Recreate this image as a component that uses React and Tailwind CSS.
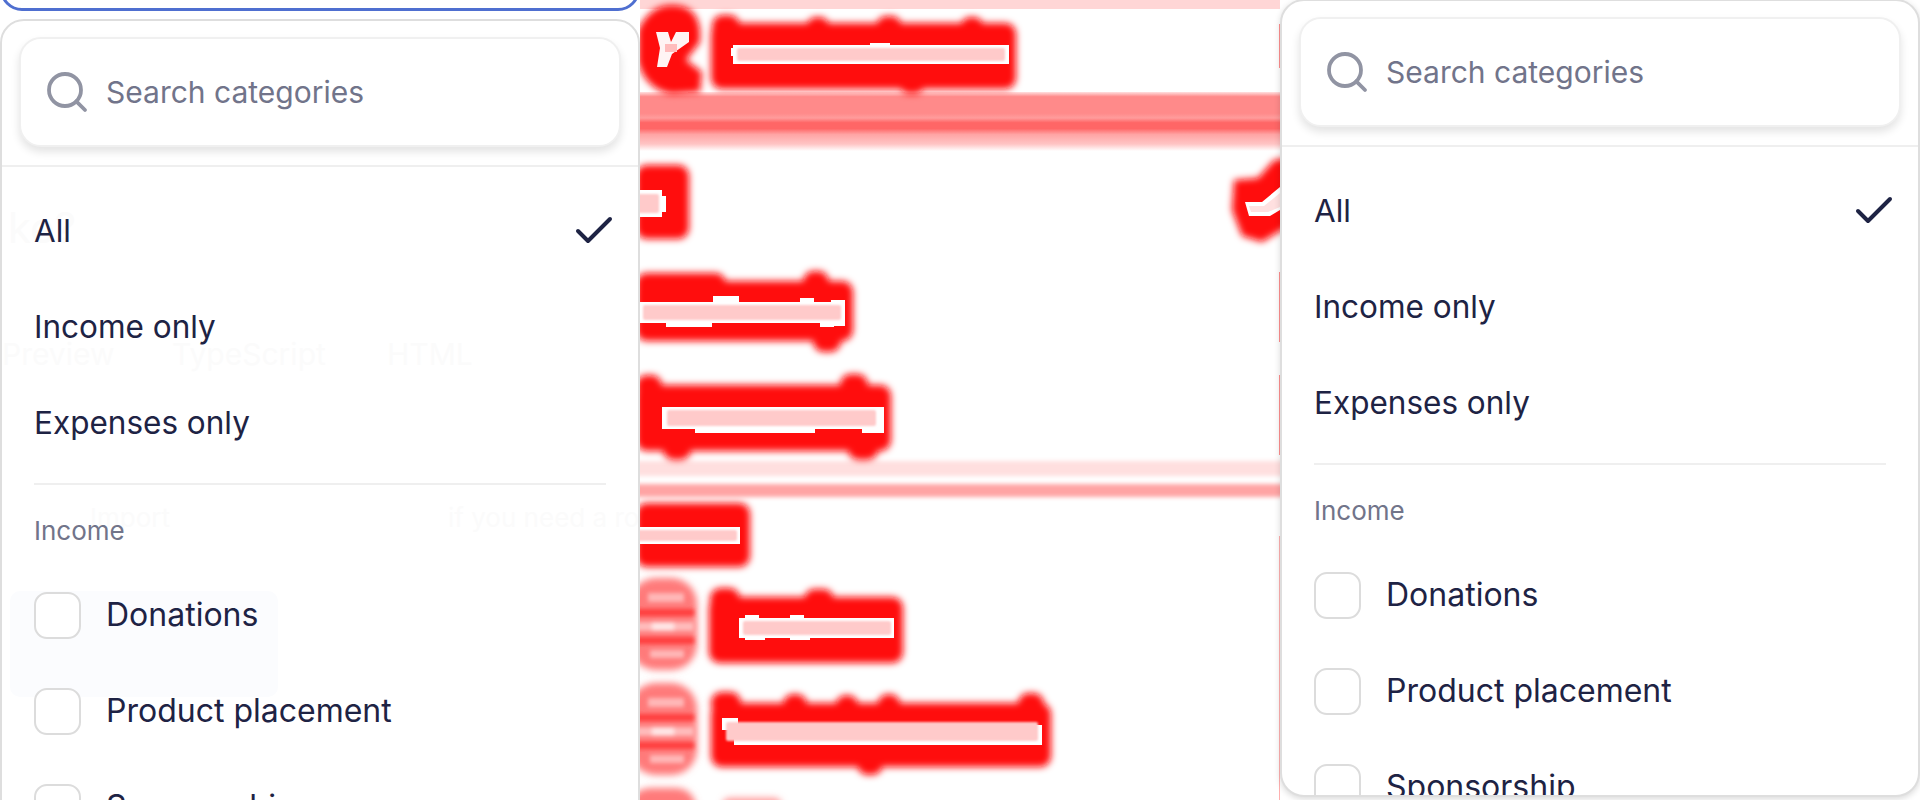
import React from 'react';
import { Search, Check } from 'lucide-react';

const fontStack = { fontFamily: 'Inter, "Noto Sans", sans-serif' };

// diff column: each text is a red mass (main box + ascender/descender bumps) and a pale core
const masses = [
  // search text
  [[711, 23, 305, 66], [712, 15, 28, 22], [806, 17, 24, 22], [876, 16, 26, 22], [960, 17, 24, 22], [900, 80, 24, 14]],
  // All (left), Income only, Expenses only
  [[636, 165, 53, 74]],
  [[636, 281, 217, 60], [636, 273, 90, 22], [803, 271, 26, 24], [813, 330, 28, 22]],
  [[636, 385, 255, 66], [636, 375, 26, 22], [840, 374, 28, 22], [663, 440, 28, 20], [848, 440, 30, 20]],
  // Income label
  [[636, 503, 114, 64]],
  // Donations, Product placement
  [[709, 597, 194, 66], [710, 588, 30, 22], [804, 589, 30, 22]],
  [[711, 703, 340, 64], [711, 692, 30, 22], [783, 694, 24, 20], [836, 695, 22, 18], [878, 694, 22, 18], [1018, 693, 26, 22], [858, 760, 24, 15]],
];

// core: white edge boxes, then the pale fill
const cores = [
  { edge: [[733, 45, 276, 19], [731, 48, 10, 8], [870, 43, 20, 6]], fill: [737, 48, 268, 13] },
  { edge: [[636, 190, 26, 27], [660, 196, 6, 16]], fill: [636, 194, 23, 19] },
  { edge: [[640, 302, 204, 21], [666, 320, 46, 7], [713, 296, 26, 6], [800, 298, 14, 6], [820, 312, 14, 15], [831, 300, 14, 26]], fill: [643, 305, 198, 15] },
  { edge: [[662, 407, 218, 22], [695, 428, 120, 5], [862, 407, 22, 26]], fill: [667, 410, 209, 16] },
  { edge: [[636, 527, 104, 17]], fill: [636, 530, 101, 11] },
  { edge: [[739, 618, 152, 20], [745, 615, 14, 5], [790, 615, 14, 5], [745, 636, 20, 4], [790, 636, 20, 4], [832, 618, 62, 20]], fill: [743, 621, 148, 14] },
  { edge: [[722, 718, 16, 12], [734, 725, 308, 20]], fill: [726, 722, 312, 19] },
];

function Mass({ rects }) {
  return rects.map(([x, y, w, h]) => (
    <rect key={`${x}-${y}`} x={x} y={y} width={w} height={h} rx="11" fill="#ff0808" />
  ));
}

function CheckboxBlob({ y }) {
  return (
    <g>
      <g filter="url(#soft)">
        <rect x="630" y={y} width="67" height="92" rx="26" fill="#ff7a7a" />
      </g>
      <g filter="url(#mid)">
        <rect x="648" y={y + 15} width="36" height="9" fill="#ffb8b8" />
        <rect x="634" y={y + 31} width="60" height="7" fill="#ff3c3c" />
        <rect x="634" y={y + 44} width="60" height="9" fill="#ffbcbc" />
        <rect x="652" y={y + 44} width="22" height="9" fill="#ffe6e6" />
        <rect x="634" y={y + 59} width="60" height="7" fill="#ff3c3c" />
        <rect x="650" y={y + 72} width="34" height="8" fill="#ffb8b8" />
      </g>
    </g>
  );
}

function DiffColumn() {
  return (
    <svg width="640" height="800" viewBox="640 0 640 800" className="block shrink-0 bg-white">
      <defs>
        <filter id="soft" x="-30%" y="-30%" width="160%" height="160%">
          <feGaussianBlur stdDeviation="3.5" />
        </filter>
        <filter id="mid" x="-30%" y="-60%" width="160%" height="220%">
          <feGaussianBlur stdDeviation="2" />
        </filter>
        <filter id="softer" x="-30%" y="-30%" width="160%" height="160%">
          <feGaussianBlur stdDeviation="1.2" />
        </filter>
        <linearGradient id="band" x1="0" y1="0" x2="0" y2="1">
          <stop offset="0" stopColor="#ffe0e0" />
          <stop offset="0.08" stopColor="#ff8a8a" />
          <stop offset="0.36" stopColor="#ff8a8a" />
          <stop offset="0.44" stopColor="#ff9c9c" />
          <stop offset="0.52" stopColor="#ff6666" />
          <stop offset="0.62" stopColor="#ff6666" />
          <stop offset="0.72" stopColor="#ffa4a4" />
          <stop offset="0.88" stopColor="#ffc4c4" />
          <stop offset="1" stopColor="#ffffff" />
        </linearGradient>
      </defs>

      <rect x="640" y="0" width="640" height="9" fill="#ffd6d6" />
      <rect x="640" y="92" width="640" height="59" fill="url(#band)" />
      <g filter="url(#mid)">
        <rect x="630" y="461" width="660" height="15" fill="#ffdfdf" />
        <rect x="630" y="484" width="660" height="13" fill="#ffa4a4" />
      </g>

      {/* search icon */}
      <g filter="url(#soft)">
        <path d="M638 30 Q650 5 672 5 Q697 5 700 30 L700 42 L686 60 L702 72 L700 92 L672 94 Q646 90 638 62 Z" fill="#ff0808" />
        {masses.map((rects, i) => <Mass key={i} rects={rects} />)}
        {/* check on the right */}
        <path d="M1234 180 L1258 178 L1274 160 L1290 158 L1290 225 L1262 242 L1242 236 L1232 210 Z" fill="#ff0808" />
      </g>
      <path d="M656 32 H668 L671 42 L676 32 H689 V42 L672 54 L667 67 H657 L660 48 Z" fill="#fff4f4" />
      <rect x="665" y="44" width="12" height="8" fill="#ffbcbc" />
      <path d="M1245 202 H1262 L1280 187 V210 L1270 216 H1249 Z" fill="#ffffff" />
      <path d="M1249 206 H1264 L1280 193 V207 L1268 212 H1251 Z" fill="#ffe0e0" />

      {cores.map(({ edge, fill }, i) => (
        <g key={i}>
          {edge.map(([x, y, w, h]) => (
            <rect key={`${x}-${y}`} x={x} y={y} width={w} height={h} fill="#ffffff" />
          ))}
          <rect x={fill[0]} y={fill[1]} width={fill[2]} height={fill[3]} rx="2" fill="#ffcaca" filter="url(#softer)" />
        </g>
      ))}

      <CheckboxBlob y={578} />
      <CheckboxBlob y={683} />
      <g filter="url(#soft)">
        <rect x="630" y="788" width="66" height="40" rx="20" fill="#ff7a7a" />
        <rect x="722" y="798" width="60" height="20" rx="8" fill="#ff9a9a" />
      </g>

      {/* edge marks where the right panel clips the diff */}
      <rect x="1279" y="536" width="1" height="264" fill="#ffb0b0" />
      <rect x="1279" y="272" width="1" height="70" fill="#ff9090" />
      <rect x="1279" y="375" width="1" height="80" fill="#ff9090" />
      <rect x="1279" y="24" width="1" height="44" fill="#ff9090" />
    </svg>
  );
}

function Row({ label, checked }) {
  return (
    <div className="flex items-center justify-between h-[96px] pl-[32px] pr-[20px] text-[31.5px] leading-none text-[#1e2344]">
      <span>{label}</span>
      {checked && <Check size={48} strokeWidth={2} className="text-[#1e2344]" />}
    </div>
  );
}

function CheckRow({ label }) {
  return (
    <div className="flex items-center gap-[25px] h-[96px] pl-[32px] text-[32px] leading-none text-[#1e2344]">
      <span className="w-[47px] h-[47px] shrink-0 rounded-[13px] border-2 border-[#dcdcdc] bg-white" />
      <span>{label}</span>
    </div>
  );
}

function CategoryPanel() {
  return (
    <div className="relative">
      <div className="pt-[16px] px-[17px] pb-[18px] border-b-2 border-[#efefef]">
        <div className="flex items-center gap-[15px] h-[110px] pl-[22px] rounded-[22px] border-2 border-[#f0f0f0] bg-white shadow-[0_5px_8px_rgba(0,0,0,0.11)]">
          <Search size={48} strokeWidth={1.9} className="text-[#9194a3] shrink-0" />
          <span className="text-[30px] leading-none text-[#71748a]">Search categories</span>
        </div>
      </div>
      <div className="pt-[16px]">
        <Row label="All" checked />
        <Row label="Income only" />
        <Row label="Expenses only" />
        <div className="mx-[32px] mt-[12px] border-t-2 border-[#efefef]" />
        <div className="pl-[32px] pt-[31px] pb-[21px] text-[26px] leading-[30px] text-[#71748a]">Income</div>
        <CheckRow label="Donations" />
        <CheckRow label="Product placement" />
        <CheckRow label="Sponsorship" />
      </div>
    </div>
  );
}

// page behind the left panel, showing through very faintly
function GhostPage() {
  return (
    <div className="absolute inset-0 text-[#fbfbfb] text-[30px] leading-none">
      <span className="absolute left-[6px] top-[186px] text-[42px]">ke?</span>
      <span className="absolute left-0 top-[318px]">Preview</span>
      <span className="absolute left-[170px] top-[318px]">TypeScript</span>
      <span className="absolute left-[385px] top-[318px]">HTML</span>
      <span className="absolute left-[88px] top-[484px] text-[26px]">Import</span>
      <span className="absolute left-[446px] top-[484px] text-[26px] whitespace-nowrap">if you need a rou</span>
      <div className="absolute left-[8px] top-[570px] w-[268px] h-[106px] rounded-[10px] bg-[#fbfcfe]" />
    </div>
  );
}

export default function App() {
  return (
    <div className="flex w-[1920px] h-[800px] overflow-hidden bg-white" style={fontStack}>
      <div className="w-[640px] shrink-0 h-[800px] overflow-hidden">
        <div className="h-[51px] -mt-[40px] rounded-b-[22px] border-[3px] border-[#4f6fd0] bg-white" />
        <div className="relative mt-[8px] h-[840px] overflow-hidden rounded-t-[24px] border-2 border-[#dedede] bg-white">
          <GhostPage />
          <CategoryPanel />
        </div>
      </div>
      <DiffColumn />
      <div className="flex-1 min-w-0 h-[800px]">
        <div className="-mt-[1px] h-[798px] overflow-hidden rounded-[24px] border-2 border-[#dedede] bg-white shadow-[0_2px_6px_rgba(0,0,0,0.15)]">
          <CategoryPanel />
        </div>
      </div>
    </div>
  );
}
